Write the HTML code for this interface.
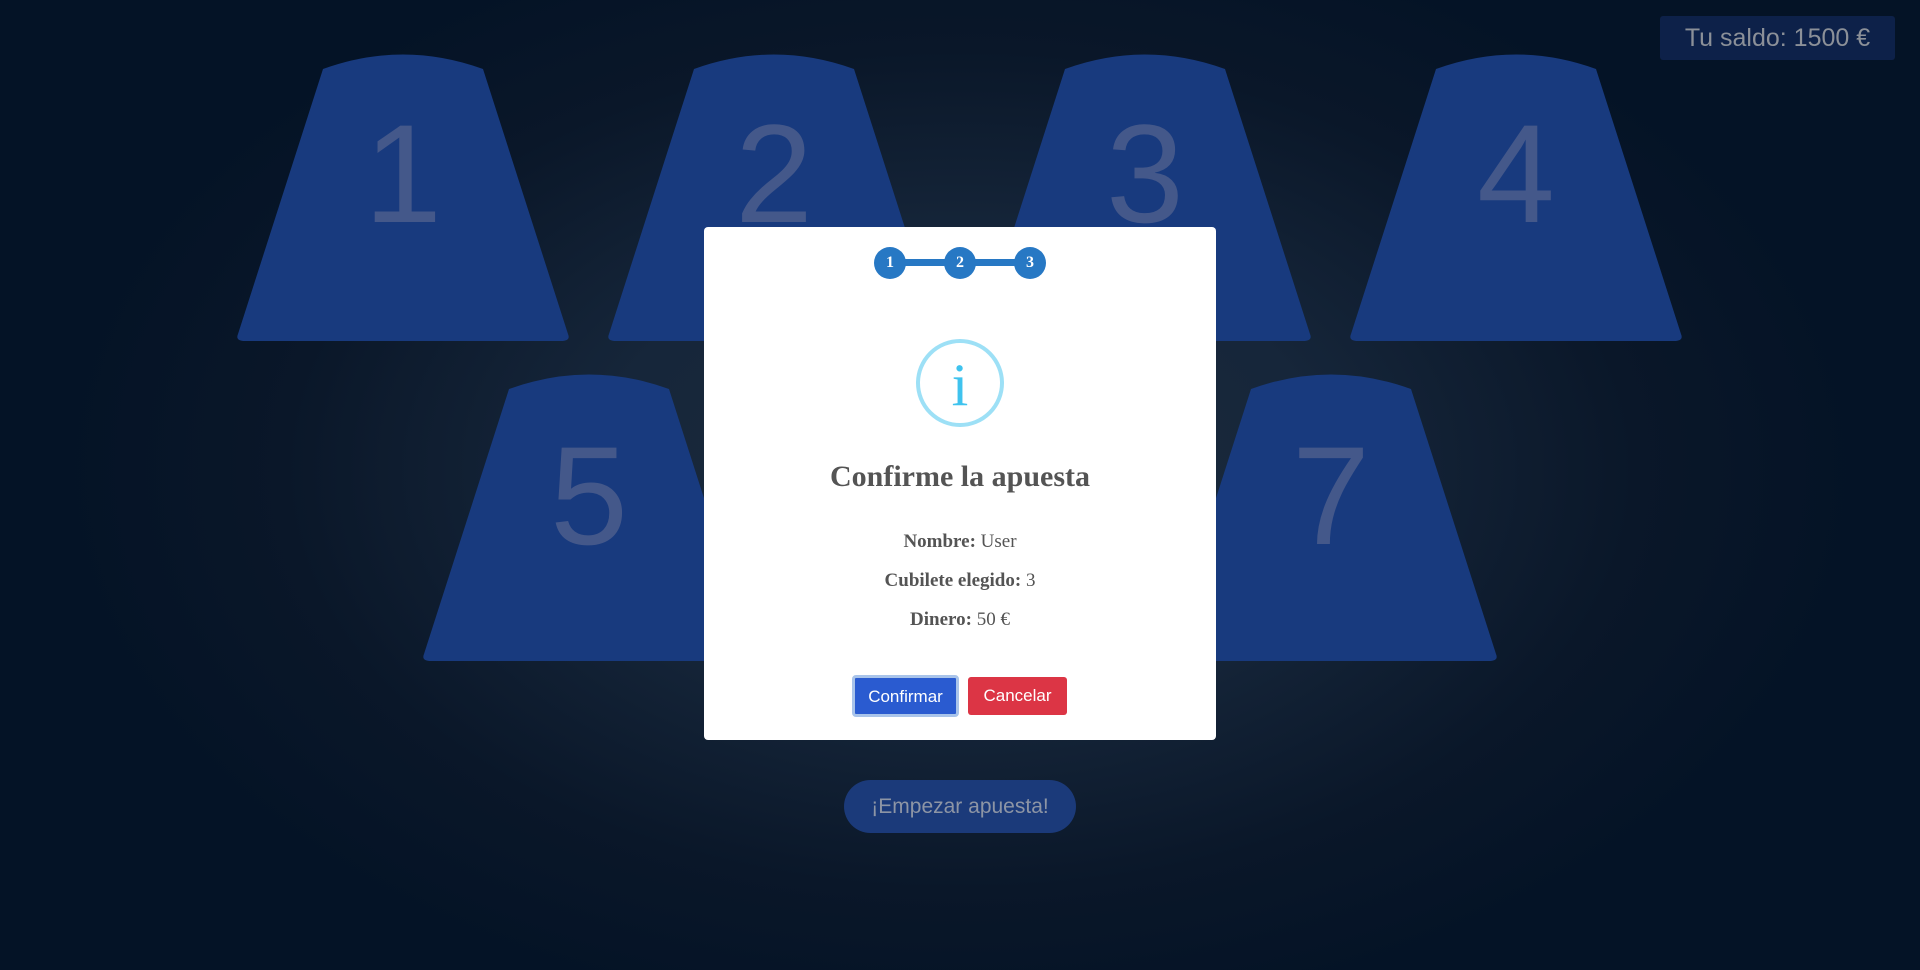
<!DOCTYPE html>
<html><head><meta charset="utf-8"><style>
html,body{margin:0;padding:0;width:1920px;height:970px;overflow:hidden}
body{background:radial-gradient(ellipse 900px 560px at 960px 470px,#1c2b3b 0%,#16263a 40%,#0a1729 75%,#041326 100%);position:relative;font-family:"Liberation Sans",sans-serif}
svg.cups{position:absolute;left:0;top:0}
.num{font-family:"Liberation Sans",sans-serif;font-size:140px;fill:#44588a;text-anchor:middle}
.saldo{position:absolute;left:1660px;top:16px;width:235px;height:44px;background:#0d2149;border-radius:3px;color:#8b9098;font-size:25px;line-height:44px;text-align:center}
.start{position:absolute;left:844px;top:780px;width:232px;height:53px;border-radius:27px;background:#1b3a7a;color:#8d95a5;font-size:21px;line-height:53px;text-align:center}
.modal{position:absolute;left:704px;top:227px;width:512px;height:513px;background:#fff;border-radius:4px;font-family:"Liberation Serif",serif;color:#545454;text-align:center}
.step{position:absolute;top:20px;width:32px;height:32px;border-radius:50%;background:#2778c4;color:#fff;font-weight:bold;font-size:16px;line-height:32px;text-align:center}
.bar{position:absolute;top:32px;height:7px;background:#2778c4}
.icon{position:absolute;left:212px;top:112px;width:80px;height:80px;border:4px solid #9de0f6;border-radius:50%;color:#3fc3ee;font-size:60px;line-height:84px}
h2{position:absolute;left:0;right:0;top:233px;margin:0;font-size:30px;font-weight:bold;color:#545454}
.row{position:absolute;left:0;right:0;font-size:19px}
.btn{position:absolute;font-family:"Liberation Sans",sans-serif;font-size:17px;color:#fff;text-align:center;border-radius:3px}
</style></head><body>
<svg class="cups" width="1920" height="970">
<defs><path id="cup" d="M-80,19 Q0,-10 80,19 L165,284 Q168,291 158,291 L-158,291 Q-168,291 -165,284 Z" fill="#183a7e"/></defs>
<use href="#cup" x="403" y="50"/><use href="#cup" x="774" y="50"/><use href="#cup" x="1145" y="50"/><use href="#cup" x="1516" y="50"/>
<use href="#cup" x="589" y="370"/><use href="#cup" x="960" y="370"/><use href="#cup" x="1331" y="370"/>
<text class="num" x="403" y="222">1</text><text class="num" x="774" y="222">2</text><text class="num" x="1145" y="222">3</text><text class="num" x="1516" y="222">4</text>
<text class="num" x="589" y="544">5</text><text class="num" x="960" y="544">6</text><text class="num" x="1331" y="544">7</text>
</svg>
<div class="saldo">Tu saldo: 1500 €</div>
<div class="start">¡Empezar apuesta!</div>
<div class="modal">
<div class="bar" style="left:186px;width:140px"></div>
<div class="step" style="left:170px">1</div>
<div class="step" style="left:240px">2</div>
<div class="step" style="left:310px">3</div>
<div class="icon">i</div>
<h2>Confirme la apuesta</h2>
<div class="row" style="top:304px"><b>Nombre:</b> User</div>
<div class="row" style="top:343px"><b>Cubilete elegido:</b> 3</div>
<div class="row" style="top:382px"><b>Dinero:</b> 50 €</div>
<div class="btn" style="left:148px;top:448px;width:107px;height:42px;line-height:38px;background:#2a5bd0;border:3px solid #a9c4ea;box-sizing:border-box;border-radius:4px">Confirmar</div>
<div class="btn" style="left:264px;top:450px;width:99px;height:38px;line-height:38px;background:#dc3545">Cancelar</div>
</div>
</body></html>
